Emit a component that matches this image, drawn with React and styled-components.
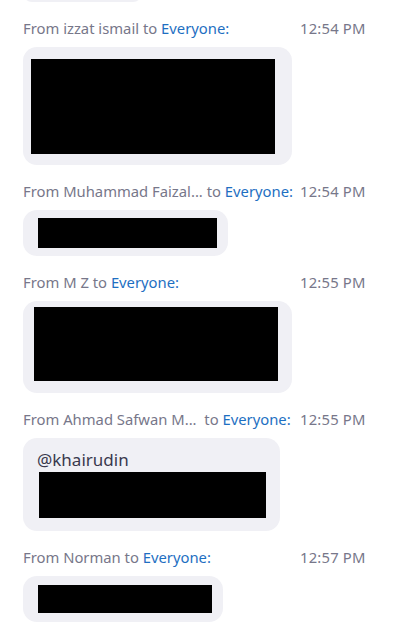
import React from 'react';
import styled, { createGlobalStyle } from 'styled-components';

const Global = createGlobalStyle`
  html, body { margin: 0; padding: 0; background: #ffffff; }
  body { font-family: "Noto Sans", "Open Sans", sans-serif; overflow: hidden; }
`;

const Feed = styled.div`
  width: 418px;
  height: 632px;
  padding-left: 23px;
  box-sizing: border-box;
  display: flex;
  flex-direction: column;
  background: #ffffff;
`;

const Message = styled.div`
  display: flex;
  flex-direction: column;
  align-items: flex-start;
  margin-top: 15px;
`;

const Header = styled.div`
  display: flex;
  align-items: flex-end;
  height: 21px;
  line-height: 20px;
  font-size: 14.8px;
  color: #77778a;
  margin-bottom: 9px;
`;

const Sender = styled.div`
  width: 277px;
  white-space: nowrap;
  overflow: hidden;
`;

const Everyone = styled.span`
  color: #1e6fc2;
`;

const Time = styled.div`
  white-space: nowrap;
  letter-spacing: 0.2px;
`;

const Bubble = styled.div`
  width: ${p => p.$w}px;
  height: ${p => p.$h}px;
  box-sizing: border-box;
  background: #f0f0f5;
  border-radius: 14px;
  display: flex;
  flex-direction: column;
  align-items: flex-start;
`;

const TopStub = styled(Bubble)`
  margin-top: -16px;
`;

const Mention = styled.div`
  margin: 12px 0 0 14px;
  font-size: 17px;
  line-height: 20px;
  color: #39394d;
`;

const Redaction = styled.div`
  background: #000000;
  width: ${p => p.$w}px;
  height: ${p => p.$h}px;
  margin-left: ${p => p.$x}px;
  margin-top: ${p => p.$y}px;
`;

const messages = [
  { from: 'izzat ismail', time: '12:54 PM', w: 269, h: 118, red: [{ x: 8, y: 12, w: 244, h: 95 }] },
  { from: 'Muhammad Faizal...', time: '12:54 PM', w: 205, h: 46, red: [{ x: 15, y: 8, w: 179, h: 30 }] },
  { from: 'M Z', time: '12:55 PM', w: 269, h: 92, red: [{ x: 11, y: 6, w: 244, h: 74 }] },
  { from: 'Ahmad Safwan M...\u00a0', time: '12:55 PM', w: 257, h: 93, mention: '@khairudin', red: [{ x: 16, y: 2, w: 227, h: 46 }] },
  { from: 'Norman', time: '12:57 PM', w: 200, h: 46, red: [{ x: 15, y: 9, w: 174, h: 28 }] },
];

export default function App() {
  return (
    <>
      <Global />
      <Feed>
        <TopStub $w={119} $h={18} />
        {messages.map((m, i) => (
          <Message key={i}>
            <Header>
              <Sender>
                From {m.from} to <Everyone>Everyone:</Everyone>
              </Sender>
              <Time>{m.time}</Time>
            </Header>
            <Bubble $w={m.w} $h={m.h}>
              {m.mention && <Mention>{m.mention}</Mention>}
              {m.red.map((r, j) => (
                <Redaction key={j} $x={r.x} $y={r.y} $w={r.w} $h={r.h} />
              ))}
            </Bubble>
          </Message>
        ))}
      </Feed>
    </>
  );
}
